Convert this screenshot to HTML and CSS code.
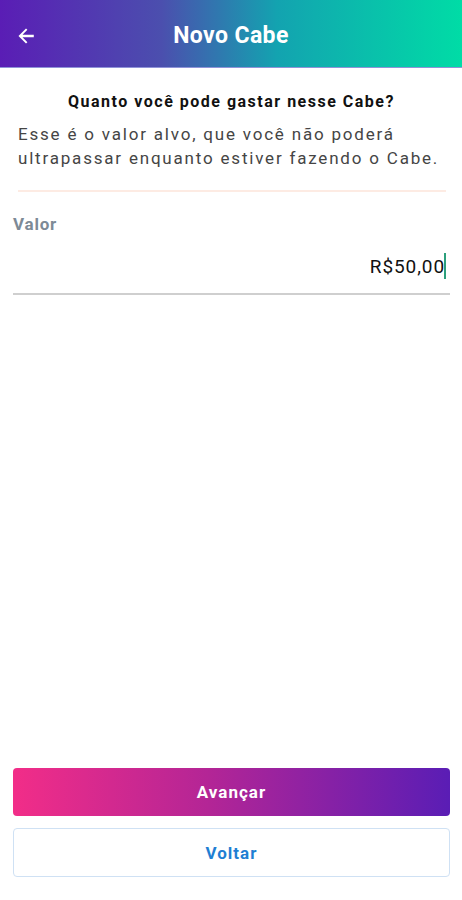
FILE: index.html
```html
<!DOCTYPE html>
<html lang="pt-BR">
<head>
  <meta charset="UTF-8" />
  <meta name="viewport" content="width=device-width, initial-scale=1.0"/>
  <title>Novo Cabe</title>
  <link rel="stylesheet" href="styles.css">
</head>
<body>

<div class="screen">
  <!-- Header -->
  <div class="header">
    <button class="back">
      <svg width="22" height="22" viewBox="0 0 24 24"><path d="M20.5 10.6H8.2l5.3-5.3L12 3.8 3.8 12l8.2 8.2 1.5-1.5-5.3-5.3h12.3v-2.8z" fill="#fff"/></svg>
    </button>
    <h1>Novo Cabe</h1>
  </div>

  <div class="content">
    <h2>Quanto você pode gastar nesse Cabe?</h2>
    <p class="desc">Esse é o valor alvo, que você não poderá ultrapassar enquanto estiver fazendo o Cabe.</p>
    <div class="divider"></div>

    <div class="field">
      <label>Valor</label>
      <div class="value">R$50,00<span class="cursor"></span></div>
    </div>
  </div>

  <div class="actions">
    <button class="btn-primary">Avançar</button>
    <button class="btn-secondary">Voltar</button>
  </div>
</div>

</body>
</html>
```

FILE: styles.css
```css
body {
  margin: 0;
  font-family: Roboto, "Liberation Sans", sans-serif;
  background: #fff;
}

.screen {
  height: 900px;
  display: flex;
  flex-direction: column;
}

.header {
  height: 67px;
  background: linear-gradient(90deg, #5a1db5 0%, #4b4fae 35%, #13a3b0 60%, #00dca6 100%);
  border-bottom: 1px solid #8f93d8;
  display: flex;
  align-items: center;
  position: relative;
}

.back {
  background: none;
  border: none;
  padding: 0;
  margin-left: 15px;
  display: flex;
  margin-top: 4px;
}

.header h1 {
  position: absolute;
  left: 0;
  right: 0;
  text-align: center;
  margin: 0;
  color: #fff;
  font-size: 23px;
  letter-spacing: 0.4px;
  font-weight: bold;
  pointer-events: none;
  margin-top: 4px;
}

.content {
  padding: 0 12px 0 13px;
  flex: 1;
}

h2 {
  text-align: center;
  font-size: 16px;
  letter-spacing: 1.5px;
  font-weight: bold;
  color: #111;
  margin: 24px 0 0;
  line-height: 20px;
}

.desc {
  margin: 10px 0 0 5px;
  font-size: 17px;
  letter-spacing: 1.8px;
  line-height: 24px;
  color: #454545;
}

.divider {
  height: 2px;
  background: #fdebe3;
  margin: 20px 4px 0 5px;
}

.field {
  margin-top: 21px;
}

.field label {
  display: block;
  font-size: 17px;
  letter-spacing: 0.8px;
  font-weight: bold;
  color: #7d8a96;
  line-height: 22px;
}

.value {
  text-align: right;
  font-size: 19px;
  letter-spacing: 0.9px;
  color: #111;
  margin-top: 18px;
  padding: 0 4px 14px 0;
  border-bottom: 2px solid #cfcfcf;
  line-height: 24px;
}

.cursor {
  display: inline-block;
  width: 2px;
  height: 26px;
  background: #2c9f7c;
  vertical-align: -6px;
  margin-left: -1px;
}

.actions {
  padding: 0 12px 23px 13px;
  display: flex;
  flex-direction: column;
  gap: 12px;
}

.btn-primary {
  height: 48px;
  border: none;
  border-radius: 4px;
  background: linear-gradient(90deg, #f22d88 0%, #b32596 45%, #5a1db5 100%);
  color: #fff;
  font-family: Roboto, "Liberation Sans", sans-serif;
  font-size: 17px;
  letter-spacing: 1px;
  font-weight: bold;
}

.btn-secondary {
  height: 49px;
  border: 1px solid #cfe1f4;
  border-radius: 4px;
  background: #fff;
  color: #1f7fd3;
  font-family: Roboto, "Liberation Sans", sans-serif;
  font-size: 17px;
  letter-spacing: 1px;
  font-weight: bold;
}
```
